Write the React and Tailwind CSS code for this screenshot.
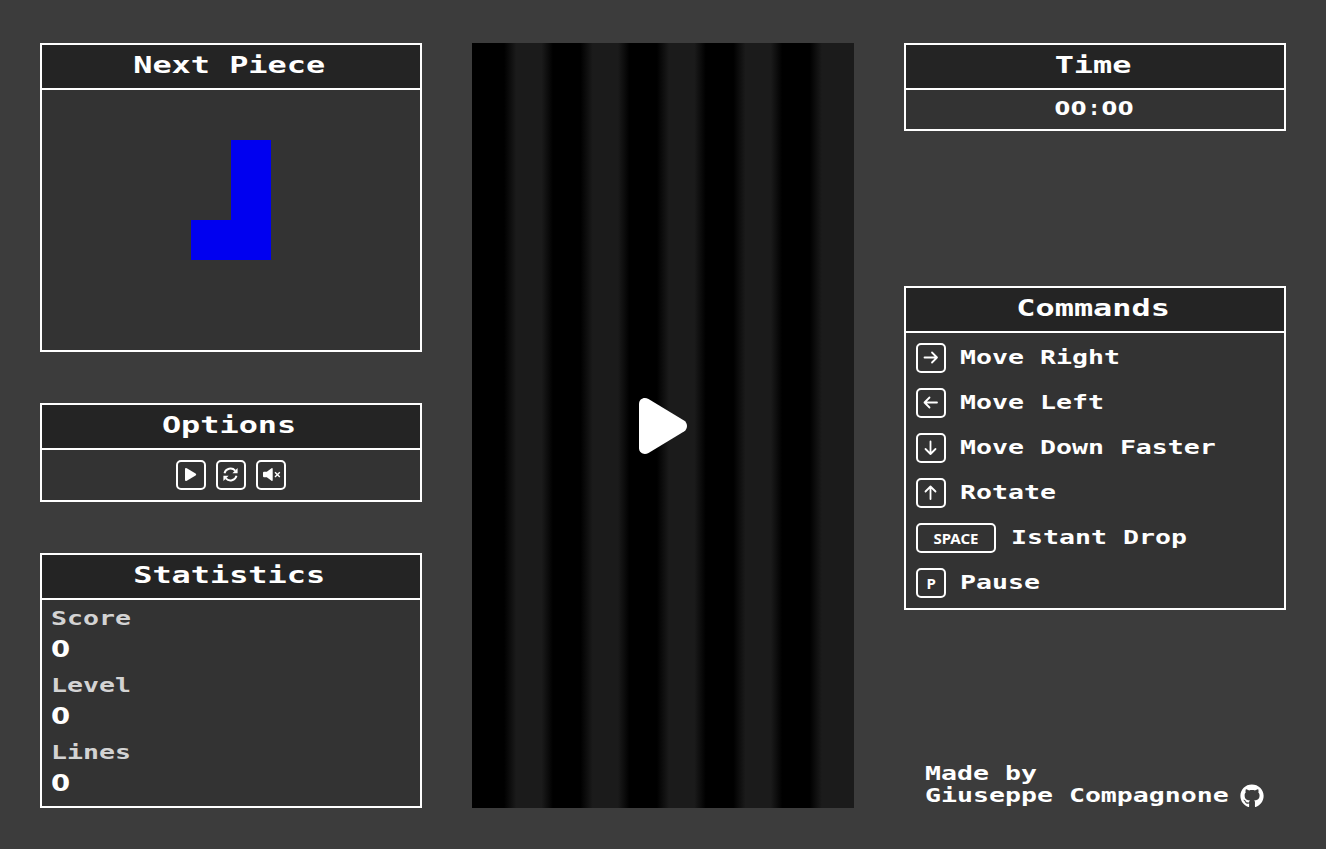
import { FaGithub } from "react-icons/fa6";

const Label = ({ children, className = "" }) => (
  <span
    className={`block w-fit origin-left scale-x-[1.384] whitespace-pre font-['DejaVu_Sans_Mono',monospace] text-[19.2px] font-bold leading-[22px] ${className}`}
  >
    {children}
  </span>
);

const Panel = ({ title, className = "", children }) => (
  <section className={`w-full border-2 border-white bg-[#333333] ${className}`}>
    <h2 className="flex h-[45px] justify-center border-b-2 border-white bg-[#242424] pr-[3px] pt-[6px]">
      <span className="block scale-x-[1.368] whitespace-pre font-['DejaVu_Sans_Mono',monospace] text-[23.3px] font-bold leading-[27px]">
        {title}
      </span>
    </h2>
    {children}
  </section>
);

const Key = ({ children, className = "w-[30px]" }) => (
  <span
    className={`flex h-[30px] shrink-0 items-center justify-center rounded-[5px] border-2 border-white ${className}`}
  >
    {children}
  </span>
);

const KeyText = ({ children }) => (
  <span className="block scale-x-[1.13] pt-[2px] font-['Noto_Sans',sans-serif] text-[13.33px] font-bold leading-[18px]">
    {children}
  </span>
);

const PlayIcon = () => (
  <svg viewBox="0 0 26 26" className="h-[26px] w-[26px]" fill="currentColor">
    <path d="M7 7.200Q7 5.400 8.800 6.200L17.600 11.500Q18.900 12.500 17.600 13.500L8.800 18.800Q7 19.600 7 17.800Z" />
  </svg>
);

const RefreshIcon = () => (
  <svg viewBox="0 0 26 26" className="h-[26px] w-[26px]" fill="none" stroke="currentColor" strokeWidth="1.9">
    <path d="M6.500 11.200A6.200 6 0 0 1 17.200 8.600M18.500 13.800A6.200 6 0 0 1 7.800 16.400" />
    <path d="M19.600 6V11.200H14.400ZM5.400 19V13.800H10.600Z" fill="currentColor" stroke="none" />
  </svg>
);

const MuteIcon = () => (
  <svg viewBox="0 0 26 26" className="h-[26px] w-[26px]" fill="currentColor">
    <path d="M6 9.800H8.800L13.500 6.200Q14.700 5.600 14.700 7V18Q14.700 19.400 13.500 18.800L8.800 15.200H6Q5 15.200 5 14.200V10.800Q5 9.800 6 9.800Z" />
    <path d="M17 10.200L21.800 15M21.800 10.200L17 15" fill="none" stroke="currentColor" strokeWidth="1.400" />
  </svg>
);

const arrowPaths = {
  right: "M6.500 12.500H19M14 7.500L19 12.500L14 17.500",
  left: "M19 12.500H6.500M11.500 7.500L6.500 12.500L11.500 17.500",
  down: "M12.500 6.500V19M7.500 14L12.500 19L17.500 14",
  up: "M12.500 19V6.500M7.500 11.500L12.500 6.500L17.500 11.500",
};

const Arrow = ({ dir }) => (
  <svg
    viewBox="0 0 26 26"
    className="h-[26px] w-[26px]"
    fill="none"
    stroke="currentColor"
    strokeWidth="1.8"
    strokeLinecap="round"
    strokeLinejoin="round"
  >
    <path d={arrowPaths[dir]} />
  </svg>
);

const Command = ({ keycap, wide, text }) => (
  <li className={`flex h-[30px] ${wide ? "gap-[15px]" : "gap-[14px]"}`}>
    <Key className={wide ? "w-[80px]" : "w-[30px]"}>{keycap}</Key>
    <Label className="mt-[4px]">{text}</Label>
  </li>
);

const Stat = ({ name }) => (
  <div className="h-[67px]">
    <dt className="text-[#d3d3d3]">
      <Label>{name}</Label>
    </dt>
    <dd className="mt-[5px] w-fit origin-left scale-x-[1.18] font-['DejaVu_Sans',sans-serif] text-[23.3px] font-bold leading-[28px]">
      0
    </dd>
  </div>
);

export default function App() {
  return (
    <main className="flex h-[849px] w-[1326px] gap-[50px] overflow-hidden bg-[#3c3c3c] px-[40px] pt-[43px] text-white">
      <aside className="flex h-[765px] w-[382px] shrink-0 flex-col justify-between">
        <Panel title="Next Piece" className="h-[309px]">
          <div className="flex h-[220px] items-center justify-center">
            <div className="grid grid-cols-2">
              <div className="col-start-2 h-[80px] w-[40px] bg-[#0000f0]" />
              <div className="col-span-2 h-[40px] w-[80px] bg-[#0000f0]" />
            </div>
          </div>
        </Panel>
        <Panel title="Options" className="h-[99px]">
          <div className="flex justify-center gap-[10px] pt-[10px]">
            <Key>
              <PlayIcon />
            </Key>
            <Key>
              <RefreshIcon />
            </Key>
            <Key>
              <MuteIcon />
            </Key>
          </div>
        </Panel>
        <Panel title="Statistics" className="h-[255px]">
          <dl className="pl-[9px] pt-[8px]">
            <Stat name="Score" />
            <Stat name="Level" />
            <Stat name="Lines" />
          </dl>
        </Panel>
      </aside>

      <div className="flex h-[765px] w-[382px] shrink-0 items-center justify-center bg-[linear-gradient(90deg,#000_8.4%,#1b1b1b_11.6%,#1b1b1b_18.2%,#000_21.2%,#000_28.4%,#1b1b1b_31.6%,#1b1b1b_38.2%,#000_41.2%,#000_48.4%,#1b1b1b_51.6%,#1b1b1b_58.2%,#000_61.2%,#000_68.4%,#1b1b1b_71.6%,#1b1b1b_78.2%,#000_81.2%,#000_88.4%,#1b1b1b_91.6%)]">
        <svg viewBox="0 0 48 56" className="h-[56px] w-[48px]" fill="currentColor">
          <path d="M0 6C0 1 5 -1.500 9.500 1L45 22.500C49 25 49 31 45 33.500L9.500 55C5 57.500 0 55 0 50Z" />
        </svg>
      </div>

      <aside className="flex h-[765px] w-[382px] shrink-0 flex-col">
        <Panel title="Time" className="h-[88px]">
          <div className="flex justify-center pr-[2px] pt-[8px] font-['DejaVu_Sans',sans-serif] text-[19.2px] font-bold leading-[22px]">
            <span className="scale-x-[1.18] tracking-[0.4px]">00</span>
            <span className="mx-[6px]">:</span>
            <span className="scale-x-[1.18] tracking-[0.4px]">00</span>
          </div>
        </Panel>
        <Panel title="Commands" className="mt-[155px] h-[324px]">
          <ul className="flex flex-col gap-[15px] px-[10px] pt-[10px]">
            <Command keycap={<Arrow dir="right" />} text="Move Right" />
            <Command keycap={<Arrow dir="left" />} text="Move Left" />
            <Command keycap={<Arrow dir="down" />} text="Move Down Faster" />
            <Command keycap={<Arrow dir="up" />} text="Rotate" />
            <Command keycap={<KeyText>SPACE</KeyText>} wide text="Istant Drop" />
            <Command keycap={<KeyText>P</KeyText>} text="Pause" />
          </ul>
        </Panel>
        <footer className="mt-auto flex items-end pl-[21px]">
          <div className="w-[315px] pb-[1px]">
            <Label>Made by</Label>
            <Label>Giuseppe Compagnone</Label>
          </div>
          <FaGithub size={24} />
        </footer>
      </aside>
    </main>
  );
}
